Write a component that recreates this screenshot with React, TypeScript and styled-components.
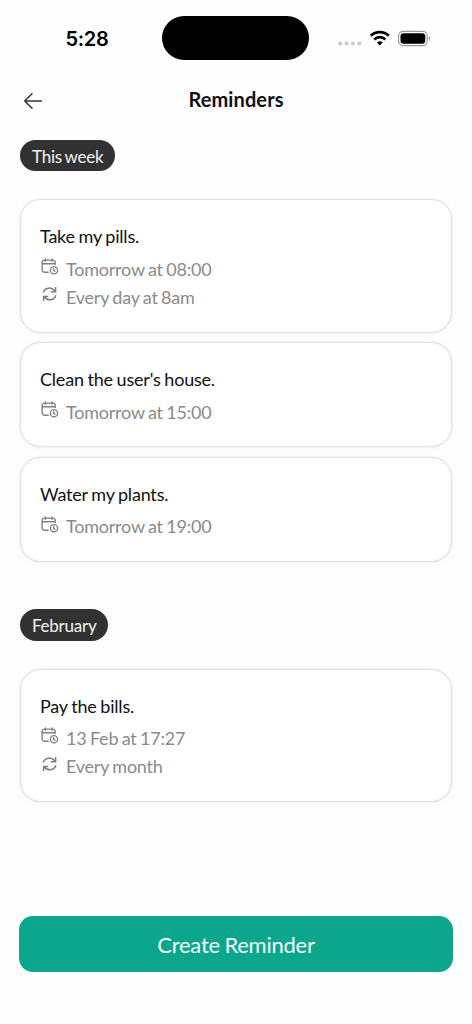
import React from 'react';
import styled, { createGlobalStyle } from 'styled-components';

const GlobalStyle = createGlobalStyle`
  * { box-sizing: border-box; }
  body { margin: 0; background: #fefefe; }
`;

const Screen = styled.div`
  display: flex;
  flex-direction: column;
  width: 472px;
  height: 1024px;
  overflow: hidden;
  background: #fefefe;
  font-family: Lato, sans-serif;
  color: #111;
  white-space: nowrap;
`;

const StatusBar = styled.div`
  display: grid;
  grid-template-columns: 162.4px 147px 1fr;
  height: 76px;
  padding-top: 16.4px;
  align-items: start;
`;

const Clock = styled.div`
  padding-left: 65.5px;
  line-height: 46px;
  font-family: Inter, sans-serif;
  font-size: 20px;
  font-weight: 600;
  letter-spacing: -0.3px;
  color: #000;
`;

const Island = styled.div`
  height: 43.2px;
  border-radius: 22px;
  background: #000;
`;

const StatusIcons = styled.svg`
  display: block;
  margin: 9.5px 0 0 27.6px;
`;

const Header = styled.header`
  display: grid;
  grid-template-columns: 44px 1fr 44px;
  align-items: center;
  height: 48px;
  padding: 0 20px;
`;

const BackButton = styled.button`
  display: flex;
  padding: 0 0 0 3px;
  border: 0;
  background: none;
  margin-top: 2px;
`;

const Heading = styled.h1`
  margin: -2px 0 0;
  text-align: center;
  font-size: 20px;
  line-height: 24px;
  font-weight: 700;
  letter-spacing: 0.1px;
  color: #111;
`;

const Section = styled.section<{ $top: number }>`
  display: flex;
  flex-direction: column;
  align-items: flex-start;
  padding: 0 20px;
  margin-top: ${(p) => p.$top}px;
`;

const Pill = styled.h2`
  margin: 0 0 28px;
  height: 31.5px;
  padding: 0 12px;
  border-radius: 16px;
  background: #323232;
  color: #f4f4f4;
  font-size: 17px;
  font-weight: 400;
  letter-spacing: -0.25px;
  word-spacing: -1px;
  line-height: 33px;
`;

const CardList = styled.div`
  display: flex;
  flex-direction: column;
  align-self: stretch;
  gap: 9.5px;
`;

const Card = styled.article`
  padding: 22px 19px 20.4px;
  border: 1px solid #e4e4e4;
  border-radius: 21px;
  background: #fff;
  box-shadow: 0 0 1.5px rgba(0, 0, 0, 0.16), 0 1px 8px rgba(0, 0, 0, 0.035);
`;

const CardTitle = styled.h3`
  margin: 0 0 4.5px;
  font-size: 18px;
  line-height: 28px;
  font-weight: 400;
  letter-spacing: -0.2px;
  word-spacing: -0.7px;
  color: #111;
`;

const Detail = styled.div`
  display: flex;
  height: 28.3px;
  font-size: 18px;
  line-height: 28.3px;
  letter-spacing: -0.22px;
  word-spacing: -0.9px;
  color: #8a8a8a;
`;

const DetailIcon = styled.svg`
  display: block;
  width: 20px;
  height: 20px;
  margin: 2.3px 6px 0 0;
  flex: none;
`;

const Footer = styled.footer`
  margin: auto 19px 52px;
`;

const CreateButton = styled.button`
  display: block;
  width: 100%;
  height: 56px;
  padding: 0;
  border: 0;
  border-radius: 14px;
  background: #0ca68c;
  color: #f4fffc;
  font-family: inherit;
  font-size: 22px;
  letter-spacing: -0.25px;
  word-spacing: -0.8px;
  line-height: 57px;
`;

const CalendarClock = () => (
  <DetailIcon viewBox="0 0 20 20" fill="none" stroke="#808080" strokeWidth="1.4" strokeLinecap="round" strokeLinejoin="round">
    <path d="M8.2 15.2H4.7a2.6 2.6 0 0 1-2.6-2.6V5.5a2.4 2.4 0 0 1 2.4-2.4h8.3a2.4 2.4 0 0 1 2.4 2.4v1.9M2.1 6.8h13.1M5.4 2v2.2M12 2v2.2" />
    <circle cx="14" cy="13.2" r="3.6" />
    <path d="M13.7 11.7v1.7l1.2.9" />
  </DetailIcon>
);

const Repeat = () => (
  <DetailIcon viewBox="0 0 20 20" fill="none" stroke="#808080" strokeWidth="1.5" strokeLinecap="butt">
    <path d="M3.2 7.5C4.8 2.6 11.4 1.2 15.1 6.4M15.6 2v4.7h-4.7M15.9 10.3C14.3 15.4 7.7 16.7 4 11.5M3.6 16.1v-4.7h4.7" />
  </DetailIcon>
);

type Reminder = { title: string; date: string; repeat?: string };

const week: Reminder[] = [
  { title: 'Take my pills.', date: 'Tomorrow at 08:00', repeat: 'Every day at 8am' },
  { title: "Clean the user's house.", date: 'Tomorrow at 15:00' },
  { title: 'Water my plants.', date: 'Tomorrow at 19:00' },
];

const february: Reminder[] = [{ title: 'Pay the bills.', date: '13 Feb at 17:27', repeat: 'Every month' }];

const ReminderGroup = ({ label, items, top }: { label: string; items: Reminder[]; top: number }) => (
  <Section $top={top}>
    <Pill>{label}</Pill>
    <CardList>
      {items.map((item) => (
        <Card key={item.title}>
          <CardTitle>{item.title}</CardTitle>
          <Detail><CalendarClock />{item.date}</Detail>
          {item.repeat && <Detail><Repeat />{item.repeat}</Detail>}
        </Card>
      ))}
    </CardList>
  </Section>
);

export default function App() {
  return (
    <Screen>
      <GlobalStyle />
      <StatusBar>
        <Clock>5:28</Clock>
        <Island />
        <StatusIcons width="96" height="24" viewBox="0 0 96 24">
          <g fill="#ccc">
            <circle cx="3.3" cy="17.6" r="2.1" />
            <circle cx="9.6" cy="17.6" r="2.1" />
            <circle cx="15.9" cy="17.6" r="2.1" />
            <circle cx="22.2" cy="17.6" r="2.1" />
          </g>
          <g fill="none" stroke="#000" strokeWidth="2.7">
            <path d="M33.8 9.8a13 13 0 0 1 18 0" />
            <path d="M37.2 13.4a8.2 8.2 0 0 1 11.2 0" />
          </g>
          <path d="M39.9 16.4a4.5 4.5 0 0 1 5.8 0l-2.9 3.2z" fill="#000" />
          <rect x="61.6" y="5.4" width="28.6" height="14.2" rx="4.5" fill="none" stroke="#999" strokeWidth="1.1" />
          <rect x="63.5" y="7.2" width="24.8" height="10.6" rx="3" fill="#000" />
          <path d="M91.8 10.3c1.8.7 1.8 3.7 0 4.4z" fill="#999" />
        </StatusIcons>
      </StatusBar>
      <Header>
        <BackButton aria-label="Back">
          <svg width="20" height="18" viewBox="0 0 20 18" fill="none" stroke="#333" strokeWidth="1.5" strokeLinecap="round" strokeLinejoin="round">
            <path d="M18.3 9H1.7M9 1.7L1.7 9 9 16.3" />
          </svg>
        </BackButton>
        <Heading>Reminders</Heading>
      </Header>
      <ReminderGroup label="This week" items={week} top={15.7} />
      <ReminderGroup label="February" items={february} top={47} />
      <Footer>
        <CreateButton>Create Reminder</CreateButton>
      </Footer>
    </Screen>
  );
}
